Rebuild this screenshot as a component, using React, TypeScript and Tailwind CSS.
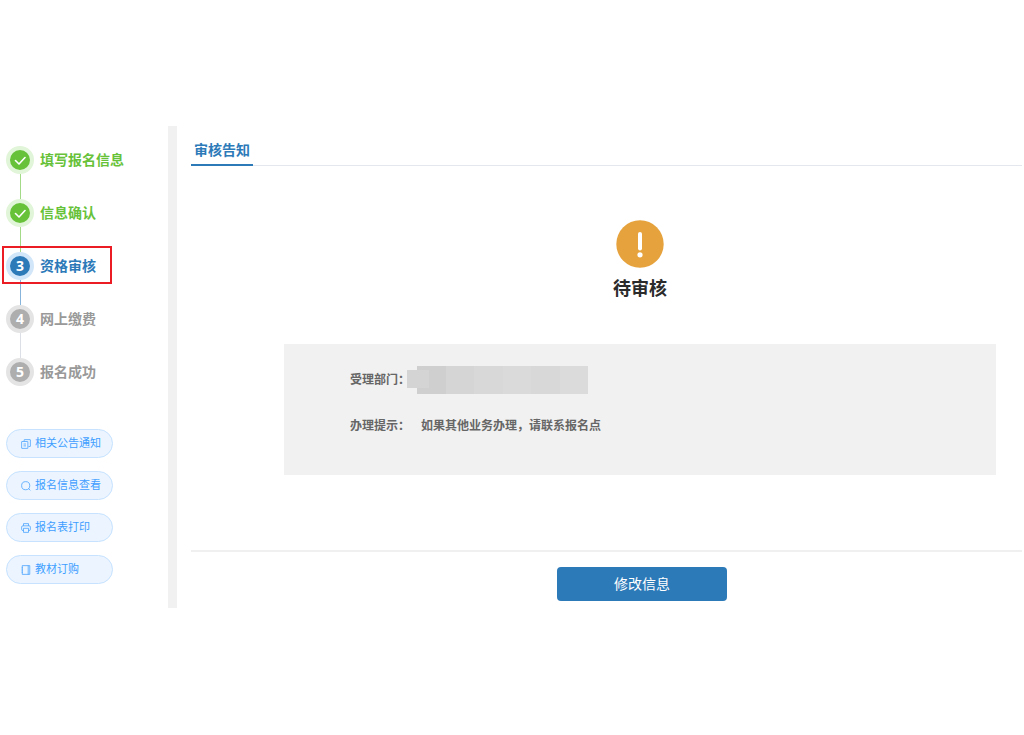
import React from 'react'

interface Step {
  id: number;
  label: string;
  status: 'done' | 'current' | 'waiting';
}

interface QuickLink {
  label: string;
  icon: React.ReactNode;
}

const steps: Step[] = [
  { id: 1, label: '填写报名信息', status: 'done' },
  { id: 2, label: '信息确认', status: 'done' },
  { id: 3, label: '资格审核', status: 'current' },
  { id: 4, label: '网上缴费', status: 'waiting' },
  { id: 5, label: '报名成功', status: 'waiting' }
]

const quickLinks: QuickLink[] = [
  {
    label: '相关公告通知',
    icon: <path d="M5 3.500V1.500Q5 1 5.500 1h9q.5 0 .5.5v10q0 .5-.5.5H12M1.500 4h9q.5 0 .5.5v10q0 .5-.5.5h-9q-.5 0-.5-.5v-10q0-.5.5-.5zM4 8h4M4 11h4" />
  },
  {
    label: '报名信息查看',
    icon: <path d="M14 7.500a6.500 6.500 0 1 1-13 0 6.500 6.500 0 0 1 13 0zM12 12l3 3" />
  },
  {
    label: '报名表打印',
    icon: <path d="M4 4.500V1h8v3.500M4 12H3Q1 12 1 10V6.500Q1 4.500 3 4.500h10Q15 4.500 15 6.500V10Q15 12 13 12H12M4 8.500h8V15H4z" />
  },
  {
    label: '教材订购',
    icon: <path d="M2 1h12v14H2zM11.500 1v14M1 4.500h2M1 8h2M1 11.500h2" />
  }
]

const mosaicColors = [
  'bg-[#cfcfcf]',
  'bg-[#d5d5d5]',
  'bg-[#d8d8d8]',
  'bg-[#dadada]',
  'bg-[#d8d8d8]',
  'bg-[#dbdbdb]'
]

export default function ReviewNotice() {
  const getCircleClass = (status: string) => {
    switch (status) {
      case 'done':
        return 'bg-[#67c23a] border-[#e1f5d8]'
      case 'current':
        return 'bg-[#2d7ab9] border-[#d1e6f9]'
      default:
        return 'bg-[#aeaeae] border-[#e4e4e4]'
    }
  }

  const getLabelClass = (status: string) => {
    switch (status) {
      case 'done':
        return 'text-[#67c23a]'
      case 'current':
        return 'text-[#2d7ab9]'
      default:
        return 'text-[#999999]'
    }
  }

  const getLineClass = (status: string) => {
    switch (status) {
      case 'done':
        return 'bg-[#a3da88]'
      case 'current':
        return 'bg-[#86b4da]'
      default:
        return 'bg-[#dcdfe6]'
    }
  }

  return (
    <div className="min-h-screen bg-white pt-[126px] pr-0.5 font-['Noto_Sans','Noto_Sans_CJK_SC',sans-serif]">
      <div className="flex">
        {/* Sidebar */}
        <aside className="w-[168px] shrink-0 pt-5 pl-1.5">
          <ol>
            {steps.map((step, index) => (
              <li key={step.id}>
                <div className="relative flex w-fit items-center gap-1.5">
                  <span className={`flex h-7 w-7 items-center justify-center rounded-full border-4 text-sm leading-5 font-bold text-white ${getCircleClass(step.status)}`}>
                    {step.status === 'done' ? (
                      <svg className="h-3 w-3" viewBox="0 0 12 12" fill="none" stroke="currentColor" strokeWidth={1.6} strokeLinecap="round" strokeLinejoin="round">
                        <path d="M1.500 6.500l3.500 3.500 6-6.500" />
                      </svg>
                    ) : (
                      step.id
                    )}
                  </span>
                  <span className={`text-sm font-bold ${getLabelClass(step.status)}`}>{step.label}</span>
                  {step.status === 'current' && (
                    <span className="absolute -top-1.5 -right-4 -bottom-1 -left-1 border-2 border-[#ec1c24]" />
                  )}
                </div>
                {index < steps.length - 1 && (
                  <div className={`ml-3.5 h-[25px] w-px ${getLineClass(step.status)}`} />
                )}
              </li>
            ))}
          </ol>

          <nav className="mt-[43px] flex w-[107px] flex-col gap-[13px]">
            {quickLinks.map((link) => (
              <button
                key={link.label}
                className="flex h-[29px] items-center gap-1 rounded-full border border-[#c6e2ff] bg-[#ecf5ff] pl-3.5 text-[11px] whitespace-nowrap text-[#409eff]"
              >
                <svg className="h-[10px] w-[10px]" viewBox="0 0 16 16" fill="none" stroke="currentColor" strokeWidth={1.2}>
                  {link.icon}
                </svg>
                {link.label}
              </button>
            ))}
          </nav>
        </aside>

        <div className="w-[9px] shrink-0 bg-[#f1f1f1]" />

        {/* Review result */}
        <main className="ml-3.5 flex-1 pb-[7px]">
          <div className="flex h-10 items-end border-b border-[#e4e7ed]">
            <h1 className="-mb-px w-[62px] border-b-2 border-[#2d7ab9] pb-0.5 text-center text-sm leading-6 font-bold text-[#2d7ab9]">审核告知</h1>
          </div>

          <div className="mt-[54px] mr-[26px] ml-[93px]">
            <div className="flex flex-col items-center gap-2">
              <svg className="h-12 w-12" viewBox="0 0 48 48">
                <circle cx="24" cy="24" r="23.700" fill="#e6a23c" />
                <path d="M24 14v14.500" stroke="#fff" strokeWidth={4} strokeLinecap="round" />
                <circle cx="24" cy="34.800" r="2.600" fill="#fff" />
              </svg>
              <h2 className="text-lg leading-6 font-bold text-[#2b2b2b]">待审核</h2>
            </div>

            <dl className="mt-11 flex flex-col gap-[18px] bg-[#f1f1f1] pt-[22px] pb-[35px] pl-[66px] text-xs font-bold whitespace-nowrap text-[#666666]">
              <div className="flex h-7 items-center">
                <dt className="w-[57px]">受理部门：</dt>
                <dd className="relative flex h-7 w-[181px] pl-2.5">
                  {mosaicColors.map((color, index) => (
                    <span key={index} className={`flex-1 ${color}`} />
                  ))}
                  <span className="absolute top-1 left-0 h-[18px] w-[22px] bg-[#d4d4d4]" />
                </dd>
              </div>
              <div className="flex h-7 items-center">
                <dt className="w-[71px]">办理提示：</dt>
                <dd>如果其他业务办理，请联系报名点</dd>
              </div>
            </dl>
          </div>

          <div className="mt-[75px] flex justify-center border-t-2 border-[#f0f0f0] pt-[15px] pl-[71px]">
            <button className="h-[34px] w-[170px] rounded-sm bg-[#2d7ab9] text-sm text-white">修改信息</button>
          </div>
        </main>
      </div>
    </div>
  )
}
